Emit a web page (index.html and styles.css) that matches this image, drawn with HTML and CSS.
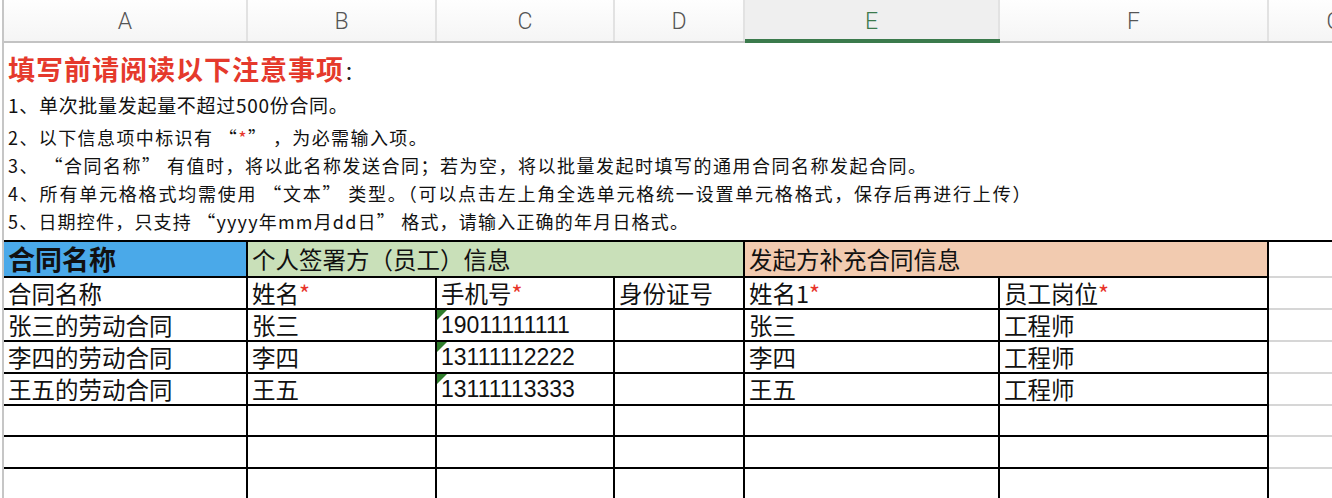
FILE: index.html
```html
<!DOCTYPE html>
<html lang="zh-CN">
<head>
<meta charset="utf-8">
<title>批量发起合同模板</title>
<link rel="stylesheet" href="styles.css">
</head>
<body>
<div class="sheet">
  <div class="colhead">
    <div class="ch">A</div>
    <div class="ch">B</div>
    <div class="ch">C</div>
    <div class="ch">D</div>
    <div class="ch sel">E</div>
    <div class="ch">F</div>
    <div class="ch last">G</div>
  </div>
  <div class="notes">
    <div class="title">填写前请阅读以下注意事项<span class="colon">：</span></div>
    <div class="line l1">1、单次批量发起量不超过500份合同。</div>
    <div class="line l2">2、以下信息项中标识有 “<span class="req">*</span>” ，为必需输入项。</div>
    <div class="line">3、 “合同名称” 有值时，将以此名称发送合同；若为空，将以批量发起时填写的通用合同名称发起合同。</div>
    <div class="line l4">4、所有单元格格式均需使用 “文本” 类型。（可以点击左上角全选单元格统一设置单元格格式，保存后再进行上传）</div>
    <div class="line l5">5、日期控件，只支持 “yyyy年mm月dd日” 格式，请输入正确的年月日格式。</div>
  </div>
  <div class="grid">
    <div class="c grp blue">合同名称</div>
    <div class="c grp green span3">个人签署方（员工）信息</div>
    <div class="c grp orange span2">发起方补充合同信息</div>
    <div class="c out"></div>

    <div class="c">合同名称</div>
    <div class="c">姓名<span class="req">*</span></div>
    <div class="c">手机号<span class="req">*</span></div>
    <div class="c">身份证号</div>
    <div class="c">姓名1<span class="req">*</span></div>
    <div class="c">员工岗位<span class="req">*</span></div>
    <div class="c out"></div>

    <div class="c">张三的劳动合同</div>
    <div class="c">张三</div>
    <div class="c num tri">19011111111</div>
    <div class="c"></div>
    <div class="c">张三</div>
    <div class="c">工程师</div>
    <div class="c out"></div>

    <div class="c">李四的劳动合同</div>
    <div class="c">李四</div>
    <div class="c num tri">13111112222</div>
    <div class="c"></div>
    <div class="c">李四</div>
    <div class="c">工程师</div>
    <div class="c out"></div>

    <div class="c">王五的劳动合同</div>
    <div class="c">王五</div>
    <div class="c num tri">13111113333</div>
    <div class="c"></div>
    <div class="c">王五</div>
    <div class="c">工程师</div>
    <div class="c out"></div>

    <div class="c"></div><div class="c"></div><div class="c"></div><div class="c"></div><div class="c"></div><div class="c"></div><div class="c out"></div>
    <div class="c"></div><div class="c"></div><div class="c"></div><div class="c"></div><div class="c"></div><div class="c"></div><div class="c out"></div>
    <div class="c"></div><div class="c"></div><div class="c"></div><div class="c"></div><div class="c"></div><div class="c"></div><div class="c out"></div>
  </div>
</div>
</body>
</html>
```

FILE: styles.css
```css
html, body {
  margin: 0;
  padding: 0;
  overflow: hidden;
  background: #fff;
}

body {
  font-family: "Noto Sans CJK SC", "Noto Sans", sans-serif;
  color: #111;
}

.sheet {
  margin-left: 2px;
  border-left: 2px solid #c6c6c6;
  width: 1395px;
}

.colhead {
  display: grid;
  grid-template-columns: 244px 189px 178px 130px 255px 269px 130px;
  height: 41px;
  border-bottom: 2px solid #c3c3c3;
  background: linear-gradient(#fefefe, #f5f5f5);
}

.ch {
  position: relative;
  display: flex;
  align-items: center;
  justify-content: center;
  border-right: 2px solid #e2e2e2;
  font-family: Roboto, "Liberation Sans", sans-serif;
  font-weight: 300;
  font-size: 23px;
  color: #555;
  padding-top: 2px;
}

.ch.sel {
  background: #efefef;
  color: #3b7a4c;
}

.ch.sel::after {
  content: "";
  position: absolute;
  left: 0;
  right: -2px;
  bottom: -2px;
  height: 4px;
  background: #3b7a4c;
}

.ch.last {
  border-right: none;
}

.notes {
  height: 197px;
  box-sizing: border-box;
  padding: 9px 0 0 4px;
  white-space: nowrap;
}

.title {
  font-size: 27px;
  font-weight: 700;
  color: #e5392c;
  line-height: 34px;
  letter-spacing: 1px;
}

.title .colon {
  font-size: 20px;
  font-weight: 400;
  color: #222;
  letter-spacing: 0;
}

.line {
  font-size: 18px;
  line-height: 28px;
  letter-spacing: 1.5px;
  color: #111;
}

.line.l1 {
  font-size: 19px;
  line-height: 30px;
  margin-top: 1px;
  letter-spacing: 0.7px;
}

.line.l2 {
  margin-top: 3px;
  letter-spacing: 1.4px;
}

.line.l4 {
  letter-spacing: 1.8px;
}

.line.l5 {
  letter-spacing: 1.2px;
}

.req {
  color: #e8352b;
}

.grid {
  display: grid;
  grid-template-columns: 244px 189px 178px 130px 255px 269px 130px;
  grid-template-rows: 36px 32px 32px 32px 32px 31px 32px 32px;
  border-top: 2px solid #000;
}

.c {
  position: relative;
  box-sizing: border-box;
  border-right: 2px solid #000;
  border-bottom: 2px solid #000;
  padding: 0 0 0 4px;
  display: flex;
  align-items: center;
  font-size: 23.5px;
  line-height: 1.2;
  white-space: nowrap;
}

.c.out {
  border-right: none;
  border-bottom: 2px solid #d6d6d6;
}

.c.num {
  font-family: "Liberation Sans", "Noto Sans CJK SC", sans-serif;
  font-size: 23px;
  padding-top: 2px;
}

.c.tri::before {
  content: "";
  position: absolute;
  left: 0;
  top: 0;
  border-top: 10px solid #2f7d2c;
  border-right: 10px solid transparent;
}

.span3 { grid-column: span 3; }
.span2 { grid-column: span 2; }

.grp.blue {
  background: #4aa9e9;
  font-weight: 700;
  font-size: 27px;
}

.grp.green {
  background: #c9e0b9;
}

.grp.orange {
  background: #f2cbb0;
}
```
